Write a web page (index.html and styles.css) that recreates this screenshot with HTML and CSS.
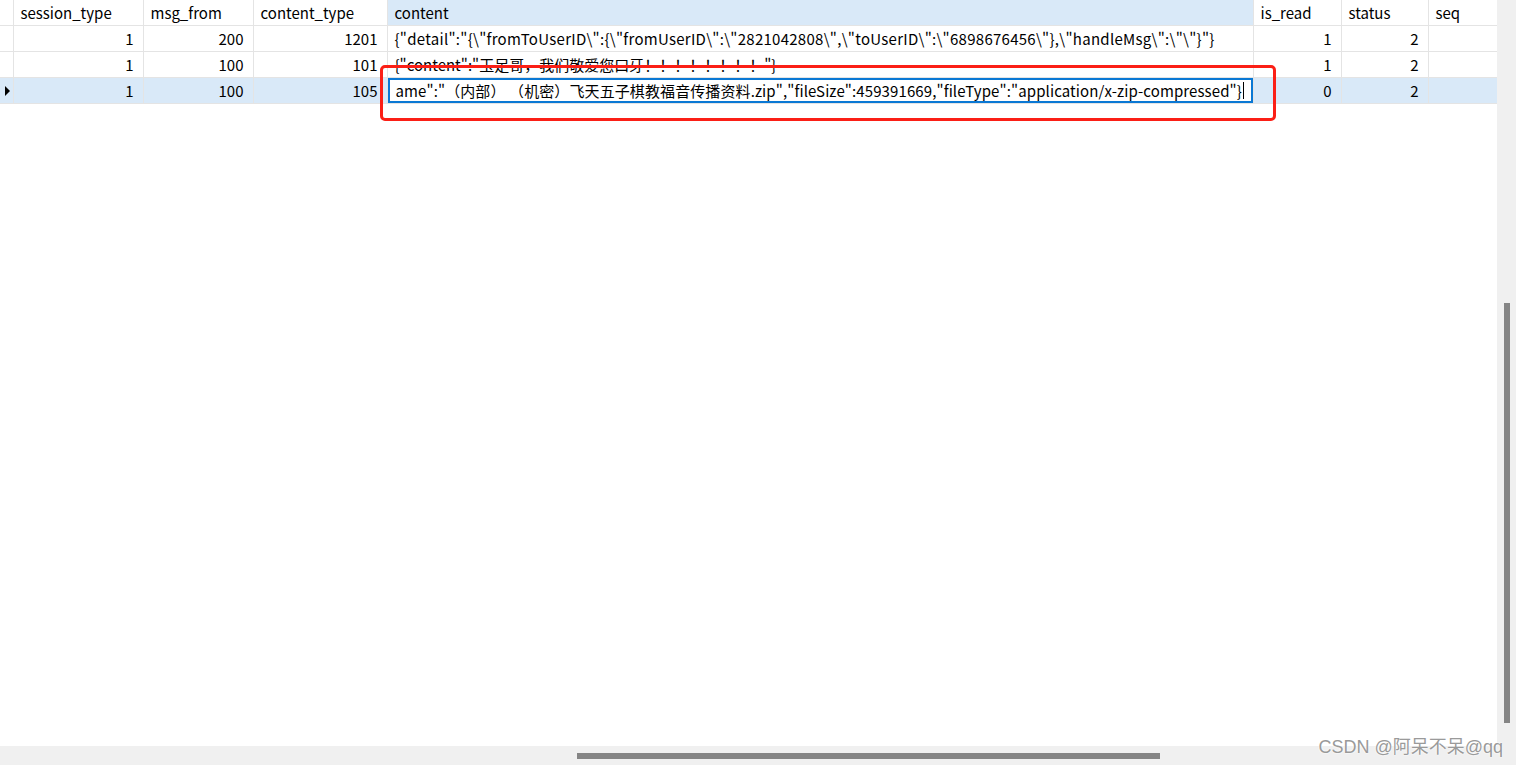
FILE: index.html
```html
<!DOCTYPE html>
<html lang="zh-CN">
<head>
  <meta charset="UTF-8">
  <title>messages</title>
  <link rel="stylesheet" href="styles.css">
</head>
<body>
  <div class="window">
    <div class="main">
      <div class="grid-area">
        <table class="grid">
          <colgroup>
            <col class="c-ind"><col class="c-st"><col class="c-mf"><col class="c-ct">
            <col class="c-content"><col class="c-read"><col class="c-status"><col class="c-seq">
          </colgroup>
          <thead>
            <tr>
              <th></th>
              <th>session_type</th>
              <th>msg_from</th>
              <th>content_type</th>
              <th class="sel-col">content</th>
              <th>is_read</th>
              <th>status</th>
              <th>seq</th>
            </tr>
          </thead>
          <tbody>
            <tr>
              <td class="ind"></td>
              <td class="num">1</td>
              <td class="num">200</td>
              <td class="num">1201</td>
              <td class="json">{"detail":"{\"fromToUserID\":{\"fromUserID\":\"2821042808\",\"toUserID\":\"6898676456\"},\"handleMsg\":\"\"}"}</td>
              <td class="num">1</td>
              <td class="num">2</td>
              <td></td>
            </tr>
            <tr>
              <td class="ind"></td>
              <td class="num">1</td>
              <td class="num">100</td>
              <td class="num">101</td>
              <td>{"content":"玉足哥，我们敬爱您口牙！！！！！！！！"}</td>
              <td class="num">1</td>
              <td class="num">2</td>
              <td></td>
            </tr>
            <tr class="current">
              <td class="ind"><span class="arrow"></span></td>
              <td class="num">1</td>
              <td class="num">100</td>
              <td class="num">105</td>
              <td class="editing">
                <div class="editor"><span class="editor-text">ame":"（内部） （机密）飞天五子棋教福音传播资料.zip","fileSize":459391669,"fileType":"application/x-zip-compressed"}</span><span class="caret"></span></div>
              </td>
              <td class="num">0</td>
              <td class="num">2</td>
              <td></td>
            </tr>
          </tbody>
        </table>
        <div class="mark"></div>
      </div>
      <div class="vscroll"><div class="vthumb"></div></div>
    </div>
    <div class="hscroll"><div class="hthumb"></div></div>
    <div class="watermark">CSDN @阿呆不呆@qq</div>
  </div>
</body>
</html>
```

FILE: styles.css
```css
html, body {
  margin: 0;
  background: #fff;
  overflow: hidden;
}
.window {
  position: relative;
  width: 1516px;
  height: 765px;
  font-family: "Noto Sans CJK SC", "Noto Sans", sans-serif;
  font-size: 15px;
  color: #000;
}
.main {
  display: flex;
  height: 746px;
}
.grid-area {
  position: relative;
  width: 1497px;
}
.grid {
  border-collapse: collapse;
  table-layout: fixed;
  width: 1497px;
}
.c-ind { width: 13px; }
.c-st { width: 130px; }
.c-mf { width: 110px; }
.c-ct { width: 134px; }
.c-content { width: 866px; }
.c-read { width: 88px; }
.c-status { width: 87px; }
.c-seq { width: 69px; }
.grid th, .grid td {
  height: 25px;
  padding: 0 9px 0 7px;
  border-right: 1px solid #e4e4e4;
  border-bottom: 1px solid #e4e4e4;
  white-space: nowrap;
  overflow: hidden;
  font-weight: normal;
  text-align: left;
  line-height: 25px;
}
.grid th:last-child, .grid td:last-child {
  border-right: none;
}
.grid th.sel-col {
  background: #d9e9f8;
}
.grid td.num {
  text-align: right;
}
.grid td.json {
  letter-spacing: 0.27px;
}
.grid td.ind {
  padding: 0;
}
.grid tr.current td {
  background: #d9e9f8;
}
.arrow {
  display: block;
  width: 0;
  height: 0;
  margin-left: 5px;
  border-top: 5px solid transparent;
  border-bottom: 5px solid transparent;
  border-left: 5px solid #000;
}
.grid td.editing {
  padding: 0;
  background: #fff;
}
.editor {
  display: flex;
  align-items: center;
  box-sizing: border-box;
  height: 25px;
  padding: 0 6px;
  border: 2px solid #0a78d4;
  background: #fff;
  overflow: hidden;
}
.editor-text {
  white-space: nowrap;
  letter-spacing: 0.1px;
}
.caret {
  flex: none;
  width: 1px;
  height: 17px;
  margin-left: 1px;
  background: #000;
}
.mark {
  position: absolute;
  left: 380px;
  top: 65px;
  width: 890px;
  height: 50px;
  border: 3px solid #fb1f16;
  border-radius: 5px;
}
.vscroll {
  width: 19px;
  background: #f0f0f0;
  padding-top: 303px;
  box-sizing: border-box;
}
.vthumb {
  width: 6px;
  height: 420px;
  margin-left: 7px;
  background: #858585;
}
.hscroll {
  height: 19px;
  background: #f0f0f0;
  padding-top: 7px;
  box-sizing: border-box;
}
.hthumb {
  width: 583px;
  height: 6px;
  margin-left: 577px;
  background: #858585;
}
.watermark {
  position: absolute;
  right: 13px;
  bottom: 7px;
  font-family: "Liberation Sans", "Noto Sans CJK SC", sans-serif;
  font-size: 18px;
  color: #9a9a9a;
  text-shadow: 0 0 2px #fff, 0 0 2px #fff;
}
```
